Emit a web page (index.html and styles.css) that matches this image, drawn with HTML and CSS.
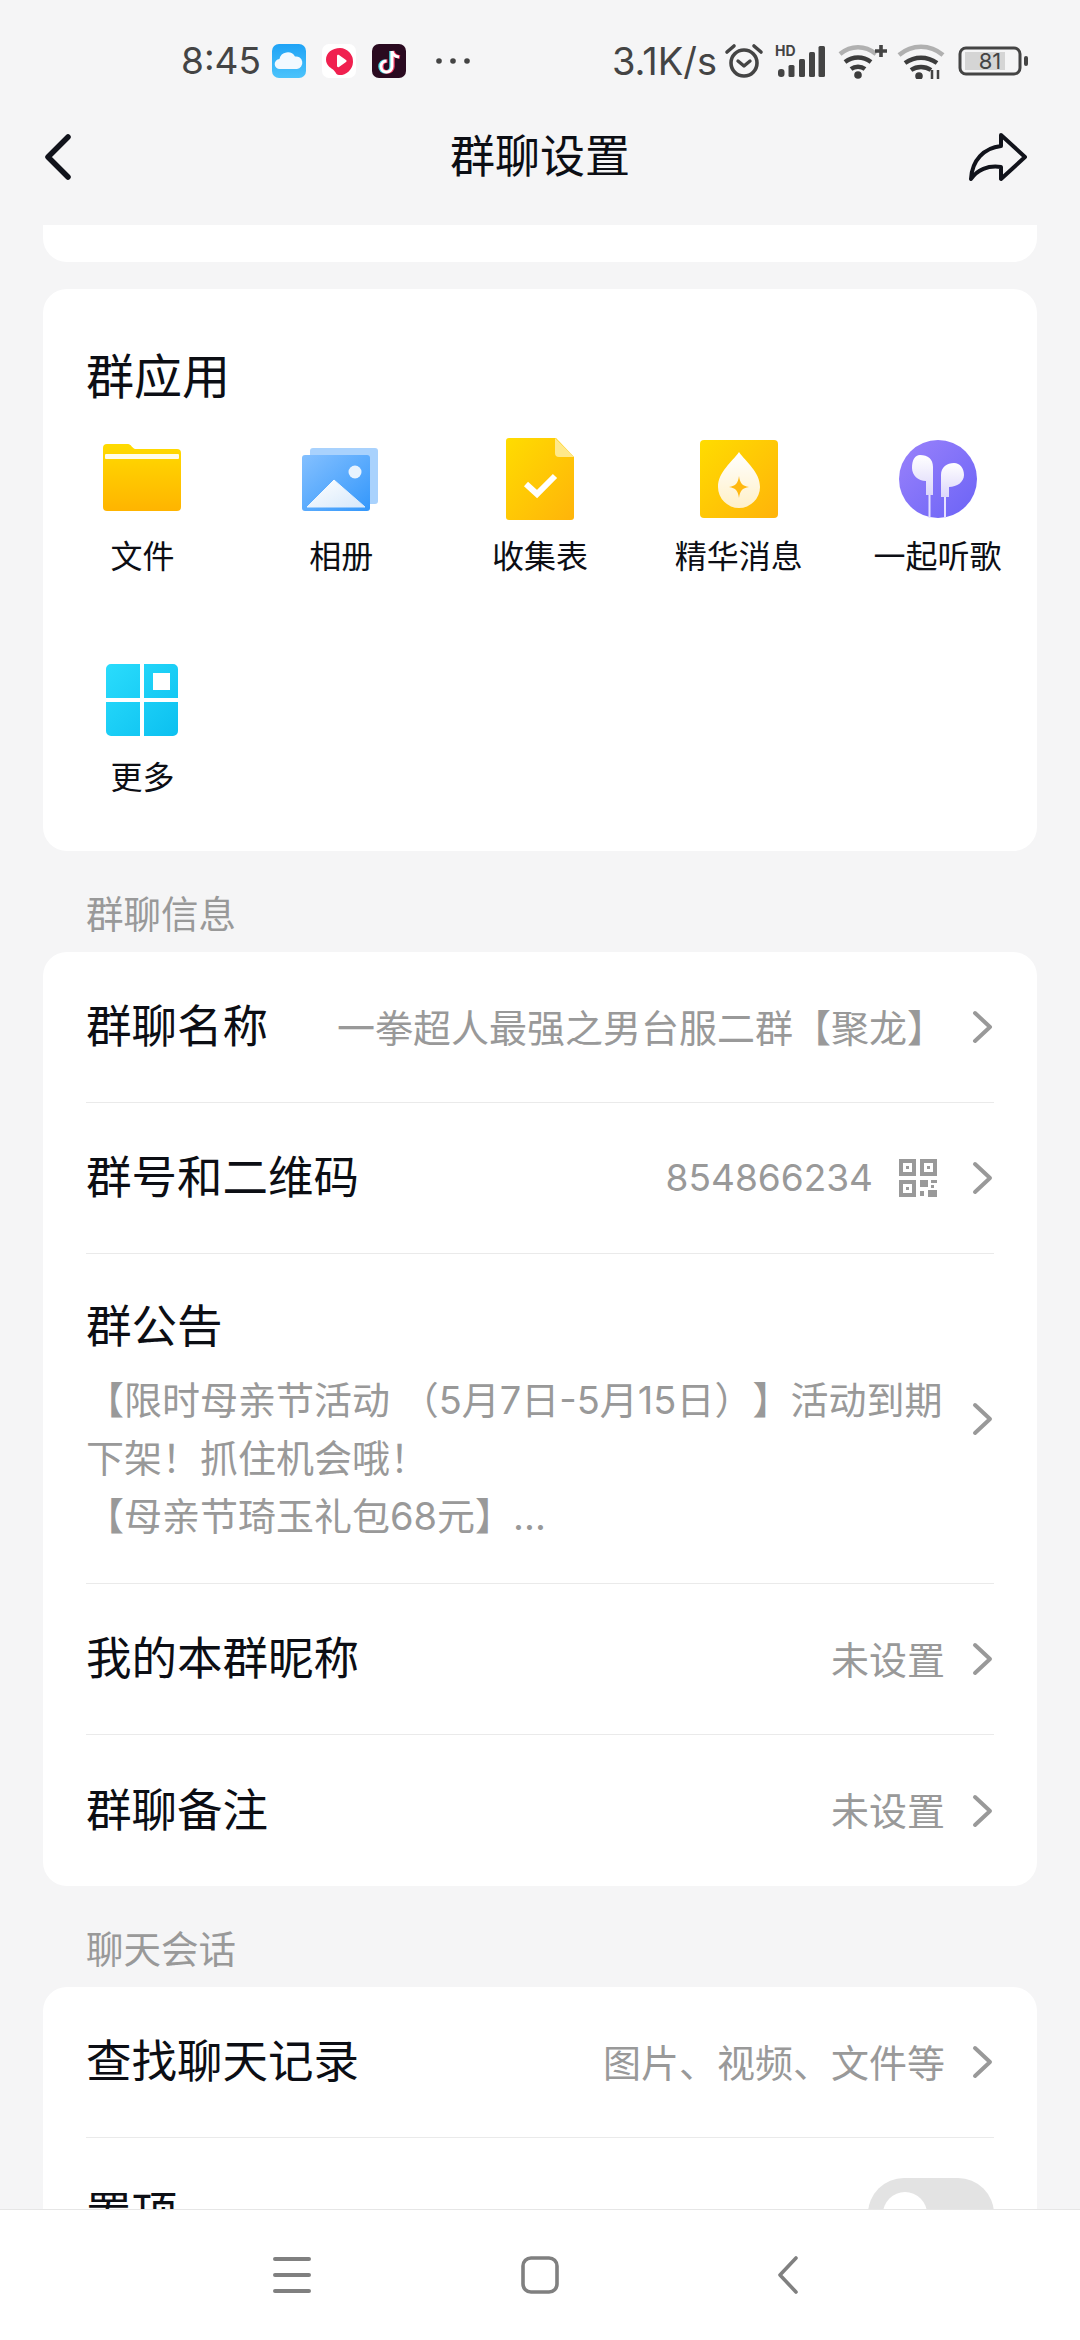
FILE: index.html
```html
<!DOCTYPE html>
<html lang="zh-CN">
<head>
<meta charset="utf-8">
<title>群聊设置</title>
<link rel="stylesheet" href="styles.css">
</head>
<body>
<div class="status">
  <div class="status-left">
    <span class="status-text">8:45</span>
    <svg class="ico34" viewBox="0 0 34 34"><defs><linearGradient id="cl" x1="0" y1="0" x2="0" y2="1"><stop offset="0" stop-color="#1fa3f6"/><stop offset="1" stop-color="#4cc3fb"/></linearGradient></defs><rect width="34" height="34" rx="7" fill="url(#cl)"/><path d="M8 25a5 5 0 0 1-.6-10A8.500 8.500 0 0 1 23 12.500 6.200 6.200 0 0 1 25 25z" fill="#f2f9ff"/></svg>
    <svg class="ico34 gap-s" viewBox="0 0 34 34"><rect width="34" height="34" rx="7" fill="#fff"/><path d="M18 4a13.500 13.500 0 1 1-1 27c-3 0-3-3-6-5.500C8 23.500 4 21 4 15.500 4 9 10 4 18 4z" fill="#f0204f"/><path d="M15 12c0-1 1-1.500 2-1l7 5c.8.600.8 1.500 0 2l-7 5c-1 .5-2 0-2-1z" fill="#fff"/></svg>
    <svg class="ico34 gap-s" viewBox="0 0 34 34"><rect width="34" height="34" rx="7" fill="#2a0a20"/><path d="M20 6v15.500a5.500 5.500 0 1 1-5.500-5.500" fill="none" stroke="#45dbe6" stroke-width="3.500" transform="translate(-1 1)"/><path d="M20 6v15.500a5.500 5.500 0 1 1-5.500-5.500M20 6c.5 3.500 3 5.500 7 6" fill="none" stroke="#f43b60" stroke-width="3.500" transform="translate(1 1)"/><path d="M20 6v15.500a5.500 5.500 0 1 1-5.500-5.500M20 6c.5 3.500 3 5.500 7 6" fill="none" stroke="#fff" stroke-width="3" transform="translate(0 1)"/></svg>
    <svg class="dots" viewBox="0 0 36 8"><circle cx="4" cy="4" r="2.800" fill="#444"/><circle cx="18" cy="4" r="2.800" fill="#444"/><circle cx="32" cy="4" r="2.800" fill="#444"/></svg>
  </div>
  <div class="status-right">
    <span class="status-text status-speed">3.1K/s</span>
    <svg class="alarm" viewBox="0 0 40 36"><circle cx="20" cy="20" r="13" fill="none" stroke="#444" stroke-width="3.600"/><path d="M14 18l6 5 6-5" fill="none" stroke="#444" stroke-width="3.400" stroke-linecap="round" stroke-linejoin="round"/><path d="M3 9L10 3M37 9L30 3" stroke="#444" stroke-width="3.600" stroke-linecap="round"/></svg>
    <svg class="signal" viewBox="0 0 50 36"><text x="0" y="13" class="hd">HD</text><rect x="3" y="26" width="6.500" height="8" rx="3" fill="#444"/><rect x="13.500" y="22" width="6" height="12" rx="1.500" fill="#444"/><rect x="24" y="16" width="6" height="18" rx="1.500" fill="#444"/><rect x="34" y="9" width="6" height="25" rx="1.500" fill="#444"/><rect x="43.500" y="3" width="6.500" height="31" rx="1.500" fill="#444"/></svg>
    <svg class="wifi" viewBox="0 0 50 36"><path d="M2 11c11-9 25-9 36 0" fill="none" stroke="#b0b0b0" stroke-width="4.500"/><path d="M7 19c8-6 18-6 26 0" fill="none" stroke="#3c3c3c" stroke-width="4.500"/><path d="M13 26c4-3 10-3 14 0" fill="none" stroke="#3c3c3c" stroke-width="4.500"/><circle cx="20" cy="32" r="3.800" fill="#3c3c3c"/><path d="M43 2v12M37 8h12" stroke="#444" stroke-width="3.600"/></svg>
    <svg class="wifi2" viewBox="0 0 48 36"><path d="M2 12c13-11 31-11 44 0" fill="none" stroke="#b0b0b0" stroke-width="4.500"/><path d="M8 20c10-7 22-7 32 0" fill="none" stroke="#3c3c3c" stroke-width="4.500"/><path d="M14 27c6-4 14-4 20 0" fill="none" stroke="#3c3c3c" stroke-width="4.500"/><circle cx="22" cy="33" r="3.800" fill="#3c3c3c"/><path d="M35 27v9M41 27v9" stroke="#444" stroke-width="2.500"/></svg>
    <svg class="battery" viewBox="0 0 70 30"><rect x="2" y="2" width="60" height="26" rx="6" fill="none" stroke="#444" stroke-width="3"/><rect x="7" y="6" width="40" height="18" fill="#d5d5d5"/><rect x="66" y="10" width="4" height="10" rx="2" fill="#444"/><text x="32" y="23" class="batt-num">81</text></svg>
  </div>
</div>

<header class="topnav">
  <svg class="nav-back" viewBox="0 0 30 48"><path d="M25 4L5 24l20 20" fill="none" stroke="#11131b" stroke-width="5.500" stroke-linecap="round" stroke-linejoin="round"/></svg>
  <h1 class="nav-title">群聊设置</h1>
  <svg class="nav-share" viewBox="0 0 60 50"><path d="M33 3l24 22-24 22V35C20 33 9 38 3 47 4 28 16 16 33 14z" fill="none" stroke="#11131b" stroke-width="4" stroke-linejoin="round"/></svg>
</header>

<main class="scroll">
  <div class="card card-stub"></div>

  <section class="card apps">
    <h2 class="apps-title">群应用</h2>
    <div class="apps-grid">
      <div class="app">
        <svg class="app-ico" viewBox="0 0 88 88"><defs><linearGradient id="f1" x1="0" y1="0" x2="0" y2="1"><stop offset="0" stop-color="#ffdb00"/><stop offset="1" stop-color="#ffb400"/></linearGradient></defs><path d="M5 13a4 4 0 0 1 4-4h21c3 0 4 4 7 5h42a4 4 0 0 1 4 4v54a4 4 0 0 1-4 4H9a4 4 0 0 1-4-4z" fill="url(#f1)"/><rect x="7" y="19" width="74" height="5" rx="1" fill="#fff" opacity=".92"/></svg>
        <span class="app-label">文件</span>
      </div>
      <div class="app">
        <svg class="app-ico" viewBox="0 0 88 88"><defs><linearGradient id="a1" x1="0" y1="0" x2="1" y2="1"><stop offset="0" stop-color="#84c0ff"/><stop offset="1" stop-color="#3397fb"/></linearGradient><linearGradient id="a2" x1="0" y1="0" x2="1" y2="1"><stop offset="0" stop-color="#fff"/><stop offset="1" stop-color="#d6e8fb"/></linearGradient></defs><rect x="13" y="13" width="68" height="56" rx="3" fill="#a9d2fd"/><rect x="5" y="20" width="68" height="56" rx="3" fill="url(#a1)"/><circle cx="58" cy="37" r="6.500" fill="#e8f3fe"/><path d="M10 72l27-27 31 27z" fill="url(#a2)" stroke="url(#a2)" stroke-linejoin="round" stroke-width="1"/></svg>
        <span class="app-label">相册</span>
      </div>
      <div class="app">
        <svg class="app-ico" viewBox="0 0 88 88"><defs><linearGradient id="d1" x1="0" y1="0" x2="1" y2="1"><stop offset="0" stop-color="#ffdc00"/><stop offset="1" stop-color="#ffb40a"/></linearGradient></defs><path d="M10 6a3 3 0 0 1 3-3h47l18 19v60a3 3 0 0 1-3 3H13a3 3 0 0 1-3-3z" fill="url(#d1)"/><path d="M59 3l19 19H63a4 4 0 0 1-4-4z" fill="#ffe98a"/><path d="M30 49l11 10 18-18" fill="none" stroke="#fff" stroke-width="6"/></svg>
        <span class="app-label">收集表</span>
      </div>
      <div class="app">
        <svg class="app-ico" viewBox="0 0 88 88"><defs><linearGradient id="j1" x1="0" y1="0" x2="1" y2="1"><stop offset="0" stop-color="#ffdc00"/><stop offset="1" stop-color="#ffb30a"/></linearGradient><linearGradient id="j2" x1="0" y1="0" x2="0" y2="1"><stop offset="0" stop-color="#fff"/><stop offset="1" stop-color="#fff0c8"/></linearGradient></defs><rect x="5" y="5" width="78" height="78" rx="4" fill="url(#j1)"/><path d="M44 17c7 10 21 20 21 35a21 21 0 0 1-42 0c0-15 14-25 21-35z" fill="url(#j2)"/><path d="M44 41c1 7 3 10 10 11-7 1-9 4-10 11-1-7-3-10-10-11 7-1 9-4 10-11z" fill="#ffb80f"/></svg>
        <span class="app-label">精华消息</span>
      </div>
      <div class="app">
        <svg class="app-ico" viewBox="0 0 88 88"><defs><linearGradient id="e1" x1="0" y1="0" x2="1" y2="1"><stop offset="0" stop-color="#9a82fb"/><stop offset="1" stop-color="#6b63f6"/></linearGradient><linearGradient id="e2" x1="0" y1="0" x2="0" y2="1"><stop offset="0" stop-color="#fff"/><stop offset="1" stop-color="#dcd6fb"/></linearGradient></defs><circle cx="44" cy="44" r="39" fill="url(#e1)"/><path d="M26 20c8 0 13 4 13 12v28h-7V46c-8 0-14-6-14-13 0-8 3-13 8-13z" fill="url(#e2)"/><path d="M60 28c6 0 10 5 10 12 0 7-7 12-15 12v10h-8V40c0-8 6-12 13-12z" fill="url(#e2)"/><path d="M35.500 60v23M51 62v21" stroke="#e6e1ff" stroke-width="2"/></svg>
        <span class="app-label">一起听歌</span>
      </div>
      <div class="app">
        <svg class="app-ico" viewBox="0 0 88 88"><defs><linearGradient id="m1" x1="0" y1="0" x2="1" y2="1"><stop offset="0" stop-color="#2adcfc"/><stop offset="1" stop-color="#0cc0f0"/></linearGradient></defs><path d="M8 13a5 5 0 0 1 5-5h29v34H8zM46 8h29a5 5 0 0 1 5 5v29H46zM8 46h34v34H13a5 5 0 0 1-5-5zM46 46h34v29a5 5 0 0 1-5 5H46z" fill="url(#m1)"/><rect x="55" y="17" width="17" height="17" fill="#fff"/></svg>
        <span class="app-label">更多</span>
      </div>
    </div>
  </section>

  <div class="section-label">群聊信息</div>
  <section class="card">
    <div class="row">
      <span class="row-title">群聊名称</span>
      <span class="row-value">一拳超人最强之男台服二群【聚龙】</span>
      <svg class="chev" viewBox="0 0 22 34"><path d="M3 3l15 14L3 31" fill="none" stroke="#999" stroke-width="4" stroke-linecap="round" stroke-linejoin="round"/></svg>
    </div>
    <div class="row">
      <span class="row-title">群号和二维码</span>
      <span class="row-value row-num">854866234</span>
      <svg class="qr" viewBox="0 0 40 40"><g fill="#999"><path fill-rule="evenodd" d="M1 1h17v17H1zM5 5v9h9V5zM22 1h17v17H22zM26 5v9h9V5zM1 22h17v17H1zM5 26v9h9v-9z"/><rect x="8" y="8" width="3" height="3"/><rect x="29" y="8" width="3" height="3"/><rect x="8" y="29" width="3" height="3"/><rect x="22" y="22" width="8" height="7"/><rect x="33" y="22" width="6" height="3"/><rect x="33" y="27" width="3" height="3"/><rect x="22" y="33" width="4" height="5"/><rect x="30" y="32" width="9" height="7"/></g></svg>
      <svg class="chev" viewBox="0 0 22 34"><path d="M3 3l15 14L3 31" fill="none" stroke="#999" stroke-width="4" stroke-linecap="round" stroke-linejoin="round"/></svg>
    </div>
    <div class="row row-notice">
      <div class="notice">
        <div class="row-title notice-title">群公告</div>
        <div class="notice-line">【限时母亲节活动 （5月7日-5月15日）】活动到期</div>
        <div class="notice-line">下架！抓住机会哦！</div>
        <div class="notice-line">【母亲节琦玉礼包68元】...</div>
      </div>
      <svg class="chev" viewBox="0 0 22 34"><path d="M3 3l15 14L3 31" fill="none" stroke="#999" stroke-width="4" stroke-linecap="round" stroke-linejoin="round"/></svg>
    </div>
    <div class="row">
      <span class="row-title">我的本群昵称</span>
      <span class="row-value">未设置</span>
      <svg class="chev" viewBox="0 0 22 34"><path d="M3 3l15 14L3 31" fill="none" stroke="#999" stroke-width="4" stroke-linecap="round" stroke-linejoin="round"/></svg>
    </div>
    <div class="row row-last">
      <span class="row-title">群聊备注</span>
      <span class="row-value">未设置</span>
      <svg class="chev" viewBox="0 0 22 34"><path d="M3 3l15 14L3 31" fill="none" stroke="#999" stroke-width="4" stroke-linecap="round" stroke-linejoin="round"/></svg>
    </div>
  </section>

  <div class="section-label">聊天会话</div>
  <section class="card">
    <div class="row">
      <span class="row-title">查找聊天记录</span>
      <span class="row-value">图片、视频、文件等</span>
      <svg class="chev" viewBox="0 0 22 34"><path d="M3 3l15 14L3 31" fill="none" stroke="#999" stroke-width="4" stroke-linecap="round" stroke-linejoin="round"/></svg>
    </div>
    <div class="row row-last">
      <span class="row-title">置顶</span>
      <span class="toggle"><span class="knob"></span></span>
    </div>
  </section>
</main>

<footer class="sysnav">
  <svg class="sys-ico" viewBox="0 0 40 40"><path d="M3 4h34M3 20h34M3 36h34" stroke="#808080" stroke-width="4" stroke-linecap="round"/></svg>
  <svg class="sys-ico" viewBox="0 0 40 40"><rect x="3" y="3" width="34" height="34" rx="8" fill="none" stroke="#808080" stroke-width="3.600"/></svg>
  <svg class="sys-ico" viewBox="0 0 40 40"><path d="M28 3L12 20l16 17" fill="none" stroke="#808080" stroke-width="3.600" stroke-linecap="round" stroke-linejoin="round"/></svg>
</footer>
</body>
</html>
```

FILE: styles.css
```css
* { box-sizing: border-box; }
html, body { margin: 0; padding: 0; }
body {
  width: 1080px;
  height: 2340px;
  overflow: hidden;
  display: flex;
  flex-direction: column;
  background: #f5f5f6;
  font-family: "Noto Sans CJK SC", "Noto Sans", sans-serif;
  color: #0c0e14;
  text-spacing-trim: space-all;
}
.status {
  height: 122px;
  flex: none;
  display: flex;
  justify-content: space-between;
  align-items: center;
  padding: 0 52px 0 181px;
  color: #444;
}
.status-left, .status-right { display: flex; align-items: center; }
.status-text { font-family: Inter, Roboto, sans-serif; font-size: 37px; line-height: 40px; color: #444; }
.status-speed { font-size: 38px; }
.ico34 { width: 34px; height: 34px; margin-left: 11px; }
.gap-s { margin-left: 16px; }
.dots { width: 36px; height: 8px; margin-left: 29px; }
.alarm { width: 40px; height: 36px; margin-left: 7px; }
.signal { width: 50px; height: 36px; margin-left: 11px; }
.wifi { width: 50px; height: 36px; margin-left: 13px; }
.wifi2 { width: 48px; height: 36px; margin-left: 9px; }
.battery { width: 70px; height: 30px; margin-left: 13px; }
.hd { font-family: Inter, sans-serif; font-size: 14px; font-weight: 700; fill: #444; }
.batt-num { font-family: Inter, sans-serif; font-size: 22px; fill: #444; text-anchor: middle; }

.topnav {
  height: 103px;
  flex: none;
  display: grid;
  grid-template-columns: 1fr auto 1fr;
  align-items: start;
  padding: 0 52px;
}
.nav-back { width: 30px; height: 48px; margin: 11px 0 0 -9px; }
.nav-share { width: 60px; height: 50px; margin-top: 10px; justify-self: end; }
.nav-title { margin: 0; font-size: 45px; font-weight: 400; line-height: 64px; }

.scroll {
  flex: 1;
  min-height: 0;
  overflow: hidden;
  padding: 0 43px;
}
.card { background: #fff; border-radius: 24px; }
.card-stub { height: 37px; border-radius: 0 0 24px 24px; margin-bottom: 27px; }

.apps { padding: 56px 0 51px; }
.apps-title { margin: 0 0 34px 43px; font-size: 48px; font-weight: 400; line-height: 56px; }
.apps-grid { display: grid; grid-template-columns: repeat(5, 1fr); row-gap: 77px; }
.app { display: flex; flex-direction: column; align-items: center; gap: 9px; padding-bottom: 3px; }
.app-ico { width: 88px; height: 88px; display: block; }
.app-label { font-size: 32px; line-height: 44px; white-space: nowrap; }

.section-label {
  height: 101px;
  padding: 41px 0 0 43px;
  font-size: 37.500px;
  line-height: 40px;
  color: #999;
}
.row {
  height: 151px;
  margin: 0 43px;
  display: flex;
  align-items: center;
  border-bottom: 1px solid #eaeaea;
}
.row-last { border-bottom: 0; }
.row-title { font-size: 45.500px; line-height: 60px; white-space: nowrap; padding-bottom: 8px; }
.row-value {
  margin-left: auto;
  font-size: 38px;
  line-height: 50px;
  color: #999;
  white-space: nowrap;
  padding-bottom: 3px;
}
.row-num { font-family: Inter, Roboto, sans-serif; font-size: 37px; padding-bottom: 0; }
.chev { width: 22px; height: 34px; margin-left: 27px; flex: none; }
.qr { width: 40px; height: 40px; margin-left: 25px; flex: none; }
.qr + .chev { margin-left: 34px; }
.row-notice { height: 330px; justify-content: space-between; }
.notice { align-self: flex-start; padding-top: 39px; }
.notice-title { padding-bottom: 0; }
.notice-line {
  font-family: Inter, "Noto Sans CJK SC", sans-serif;
  font-size: 38px;
  line-height: 58px;
  color: #999;
  white-space: nowrap;
}
.notice-title + .notice-line { margin-top: 18px; }
.toggle {
  margin-left: auto;
  width: 126px;
  height: 72px;
  border-radius: 36px;
  background: #e3e3e3;
  display: flex;
  align-items: center;
  padding-left: 15px;
}
.knob { width: 44px; height: 44px; border-radius: 50%; background: #fff; }

.sysnav {
  height: 131px;
  flex: none;
  background: #fff;
  border-top: 1px solid #e6e6e6;
  display: flex;
  align-items: center;
  justify-content: center;
  gap: 208px;
}
.sys-ico { width: 40px; height: 40px; }
```
